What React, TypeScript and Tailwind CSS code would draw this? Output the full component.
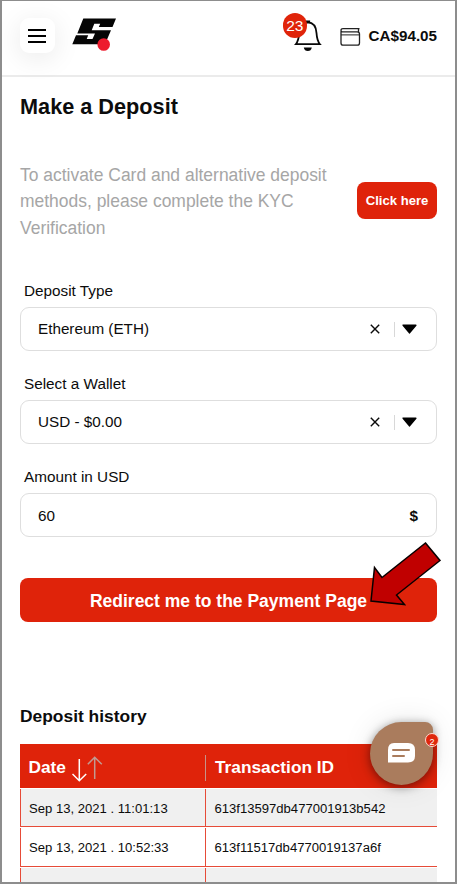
import React from "react";

const transactions = [
  { date: "Sep 13, 2021 . 11:01:13", id: "613f13597db477001913b542" },
  { date: "Sep 13, 2021 . 10:52:33", id: "613f11517db4770019137a6f" },
  { date: "Sep 13, 2021 . 10:51:28", id: "613f10fc7db4770019137e5d" },
];

function Logo() {
  return (
    <svg className="ml-[17px] mt-[17px] h-9 w-[46px]" viewBox="72 18.5 46 36">
      <path
        d="M83.3 18.9H116L112.5 27.6H98.8L100.2 24.2H94.3L91.7 30.7H111L105 44.7H72.3L76 35.7H88.2L86.7 39.6H92.5L95 34H77.3Z"
        fill="#050505"
      />
      <circle cx="103.7" cy="45" r="6.3" fill="#ed1c2e" />
    </svg>
  );
}

function Bell() {
  return (
    <div className="relative ml-auto mt-[12px] h-[40px] w-[38px]">
      <svg className="absolute left-[11px] top-[6px] h-[33px] w-[28px]" viewBox="0 0 28 33" fill="none">
        <path
          d="M1.8 25.2H25.9C23.6 22.4 22.8 18.5 22.5 14C22.1 7.8 19 3.6 13.8 3.4C8.7 3.6 5.6 7.8 5.2 14C4.9 18.5 4.1 22.4 1.8 25.2Z"
          stroke="#080808"
          strokeWidth="1.8"
        />
        <path d="M12.2 3.4V2.2H15.4V3.4" stroke="#080808" strokeWidth="1.5" />
        <path d="M9.8 28.6H17.8C17.4 31 16 32.1 13.8 32.1S10.2 31 9.8 28.6Z" fill="#080808" />
      </svg>
      <span className="absolute left-0 top-0 flex size-[24.5px] items-center justify-center rounded-full bg-[#e0240a] text-[15.5px] leading-none text-white">
        23
      </span>
    </div>
  );
}

function WalletIcon() {
  return (
    <svg className="ml-[19px] mt-[26px] h-[20px] w-[21px]" viewBox="0 0 21 20" fill="none" stroke="#222" strokeWidth="1.3">
      <path d="M1 4.2V16Q1 18.2 3.2 18.2H17.3Q19.5 18.2 19.5 16V7.1Q19.5 4.9 17.3 4.9H3Q1 4.9 1 3.3Q1 1.6 3 1.6H19.5" />
      <path d="M18.5 1.8V5" />
      <path d="M1 7.9H19.5" strokeWidth="1" />
    </svg>
  );
}

function SelectField({ label, value, className }: { label: string; value: string; className: string }) {
  return (
    <div className={className}>
      <label className="block h-4 pl-[4px] text-[15.3px] leading-4">{label}</label>
      <div className="mt-2 flex h-[44px] items-center rounded-[9px] border border-[#dedede] pl-[17px] text-[15.25px]">
        <span className="flex-1">{value}</span>
        <svg className="size-[10px]" viewBox="0 0 10 10" stroke="#0a0a0a" strokeWidth="1.4">
          <path d="M.8.8 9.2 9.2M9.2.8.8 9.2" />
        </svg>
        <span className="ml-[14px] h-[15px] w-px bg-[#d8d8d8]" />
        <svg className="ml-[7px] mr-[19.5px] h-[11px] w-[15px]" viewBox="0 0 15 11">
          <path d="M1.2 1.2H13.8L7.5 8.8Z" fill="#000" stroke="#000" strokeWidth="1.6" strokeLinejoin="round" />
        </svg>
      </div>
    </div>
  );
}

function SortArrows() {
  return (
    <svg className="ml-[6px] mt-[3px] h-[27px] w-[31px]" viewBox="0 0 31 27" fill="none" strokeWidth="1.5">
      <path d="M7.3 3V24M.5 18 7.3 24.8 14.2 18" stroke="#fff" />
      <path d="M22.7 23V2M15.8 8.3 22.7 1.3 29.8 8.3" stroke="#c19b92" />
    </svg>
  );
}

function ChatBubble() {
  return (
    <div className="absolute left-[368px] top-[720.5px] h-[63px] w-[63px]">
      <div className="flex size-full items-center justify-center rounded-[32px_8px_32px_32px] bg-[#aa7c5d] shadow-[0_2px_10px_rgba(0,0,0,0.45),0_0_30px_rgba(0,0,0,0.1)]">
        <svg className="h-[20px] w-[27px]" viewBox="0 0 27 20">
          <path d="M6 0H20Q27 0 27 7V13Q27 19.5 20 19.5H0V7Q0 0 6 0Z" fill="#fff" />
          <path d="M5 7H21M5 13H16" stroke="#aa7c5d" strokeWidth="2" strokeLinecap="round" />
        </svg>
      </div>
      <span className="absolute left-[55px] top-[11px] flex size-[14px] items-center justify-center overflow-hidden rounded-full border border-[#ffd9ce] bg-[#df270c] pt-[5px] text-[9px] leading-none text-white">
        2
      </span>
    </div>
  );
}

export default function App() {
  return (
    <div className="relative h-[884px] w-[457px] overflow-hidden border-2 border-t-[1.5px] border-[#8d8d8d] bg-white font-['Liberation_Sans',Arial,sans-serif] text-[#0c0c0c]">
      <header className="flex h-[76px] border-b-2 border-[#ebebeb] pl-[18px] pr-[18px]">
        <button aria-label="Menu" className="mt-[17px] flex size-[35px] shrink-0 flex-col items-center justify-center gap-1 rounded-[9px] bg-white pr-px shadow-[0_5px_28px_rgba(0,0,0,0.09)]">
          <span className="h-[2px] w-[18px] bg-black" />
          <span className="h-[2px] w-[18px] bg-black" />
          <span className="h-[2px] w-[18px] bg-black" />
        </button>
        <Logo />
        <Bell />
        <WalletIcon />
        <strong className="ml-[8px] mt-[25px] text-[15.2px] leading-5">CA$94.05</strong>
      </header>
      <main className="w-[435px] pl-[18px]">
        <h1 className="mt-[17px] h-[26px] text-[21.7px] font-bold leading-[26px]">Make a Deposit</h1>
        <div className="mt-[41px] flex h-[79px] items-center justify-between">
          <p className="mt-[2px] w-[320px] text-[17.47px] leading-[26.4px] text-[#a6a6a6]">
            To activate Card and alternative deposit methods, please complete the KYC Verification
          </p>
          <button className="h-[37px] w-[80px] rounded-[8px] bg-[#df230a] text-[13.1px] font-bold text-white">Click here</button>
        </div>
        <SelectField className="mt-[43px]" label="Deposit Type" value="Ethereum (ETH)" />
        <SelectField className="mt-[25px]" label="Select a Wallet" value="USD - $0.00" />
        <div className="mt-[25px]">
          <label className="block h-4 pl-[4px] text-[15.3px] leading-4">Amount in USD</label>
          <div className="mt-2 flex h-[44px] items-center justify-between rounded-[9px] border border-[#dedede] pl-[17px] pr-[18px] pt-[2px] text-[15.25px]">
            <span>60</span>
            <strong>$</strong>
          </div>
        </div>
        <button className="mt-[41px] block h-[44px] w-full rounded-[8px] bg-[#df230a] pt-[2px] text-[17.5px] font-bold text-white">
          Redirect me to the Payment Page
        </button>
        <h2 className="mt-[84px] h-5 text-[17.4px] font-bold leading-5">Deposit history</h2>
        <div className="mt-[18px]">
          <div className="flex h-[44px] items-center bg-[#df230a] pt-[3px] text-[17.3px] font-bold text-white">
            <div className="flex w-[185px] items-center pl-[8.5px]">
              <span>Date</span>
              <SortArrows />
            </div>
            <span className="h-[26px] w-px bg-[#c69389]" />
            <span className="ml-[9px]">Transaction ID</span>
          </div>
          {transactions.map((row, index) => (
            <div
              key={row.id}
              className={`mt-px flex h-[38.4px] border-b border-l border-[#e64b38] text-[13.08px] leading-[39px] ${index % 2 === 0 ? "bg-[#f0f0f0]" : "bg-white"}`}
            >
              <span className="h-full w-[185px] shrink-0 border-r border-[#e64b38] pl-[8px]">{row.date}</span>
              <span className="pl-[8.5px]">{row.id}</span>
            </div>
          ))}
        </div>
      </main>
      <svg className="absolute left-[366px] top-[538px] h-[72px] w-[78px]" viewBox="368 539.5 78 72">
        <path d="M425.5 543.5 440 561 396.5 595.5 404.5 605 371 601.5 374.5 568 382 578Z" fill="#c00000" stroke="#080000" strokeWidth="1.5" />
      </svg>
      <ChatBubble />
    </div>
  );
}
